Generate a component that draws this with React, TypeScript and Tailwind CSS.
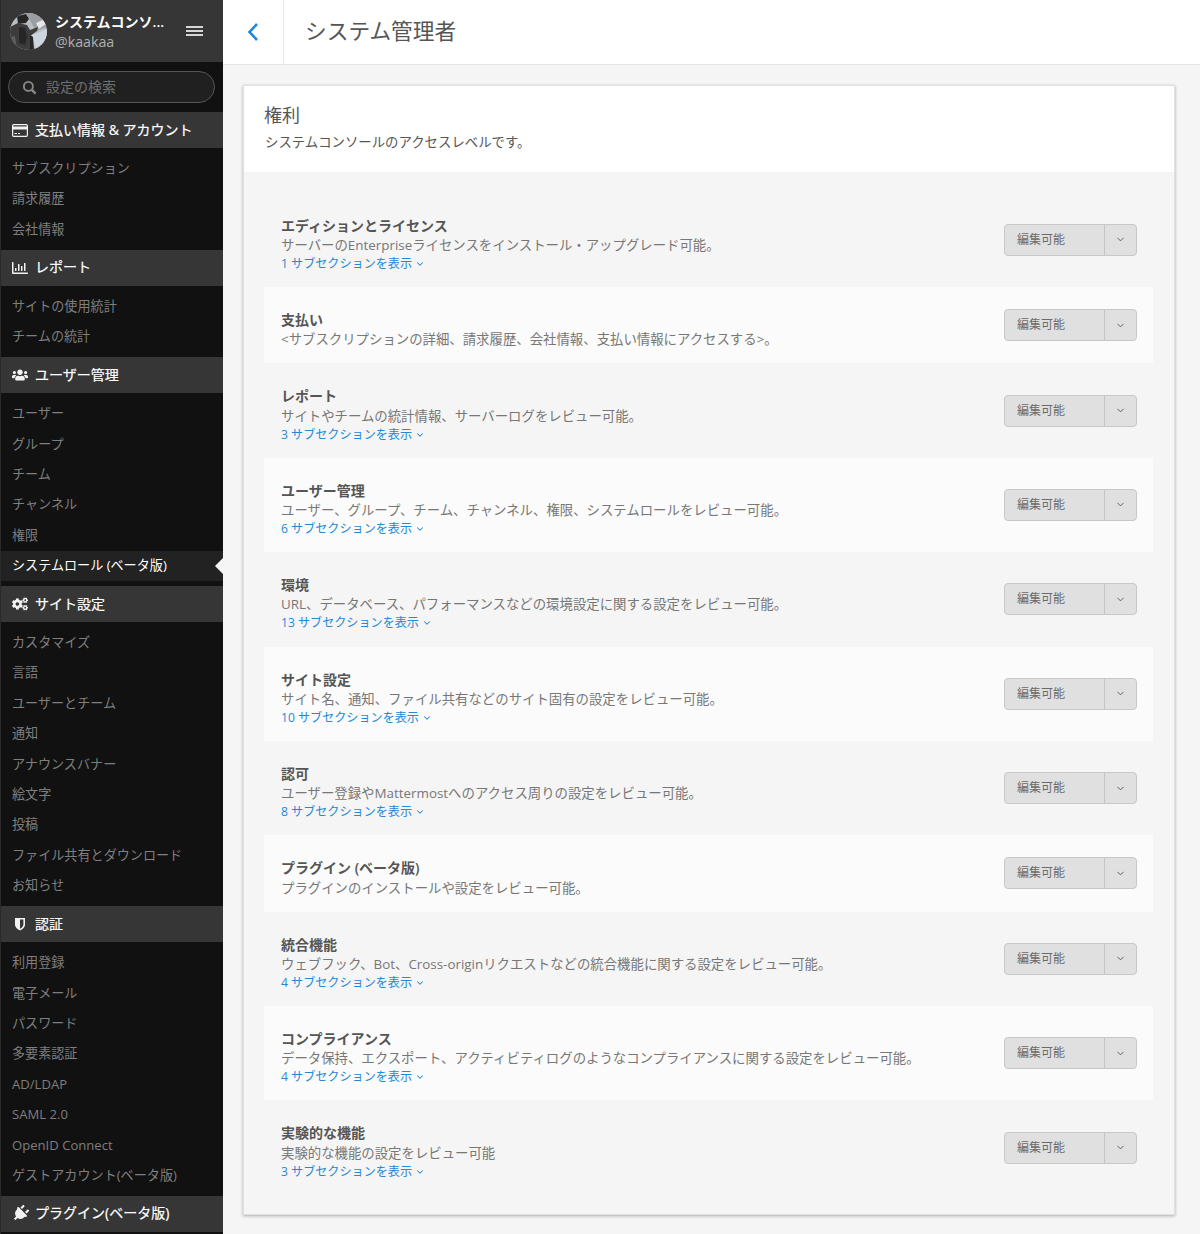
import { ChevronDown } from "lucide-react";
import { FaCogs, FaPlug, FaRegChartBar, FaUsers } from "react-icons/fa";

const fontClass = "font-['Open_Sans','Noto_Sans_CJK_JP',sans-serif]";

const sections = [
    { icon: <CardIcon />, title: "支払い情報 & アカウント", items: ["サブスクリプション", "請求履歴", "会社情報"] },
    { icon: <FaRegChartBar className="h-[16px] w-[16px]" />, title: "レポート", items: ["サイトの使用統計", "チームの統計"] },
    { icon: <FaUsers className="h-[16px] w-[16px]" />, title: "ユーザー管理", items: ["ユーザー", "グループ", "チーム", "チャンネル", "権限", "システムロール (ベータ版)"] },
    { icon: <FaCogs className="h-[16px] w-[16px]" />, title: "サイト設定", items: ["カスタマイズ", "言語", "ユーザーとチーム", "通知", "アナウンスバナー", "絵文字", "投稿", "ファイル共有とダウンロード", "お知らせ"] },
    { icon: <ShieldIcon />, title: "認証", items: ["利用登録", "電子メール", "パスワード", "多要素認証", "AD/LDAP", "SAML 2.0", "OpenID Connect", "ゲストアカウント(ベータ版)"] },
];

const rows = [
    { title: "エディションとライセンス", desc: "サーバーのEnterpriseライセンスをインストール・アップグレード可能。", count: 1 },
    { title: "支払い", desc: "<サブスクリプションの詳細、請求履歴、会社情報、支払い情報にアクセスする>。" },
    { title: "レポート", desc: "サイトやチームの統計情報、サーバーログをレビュー可能。", count: 3 },
    { title: "ユーザー管理", desc: "ユーザー、グループ、チーム、チャンネル、権限、システムロールをレビュー可能。", count: 6 },
    { title: "環境", desc: "URL、データベース、パフォーマンスなどの環境設定に関する設定をレビュー可能。", count: 13 },
    { title: "サイト設定", desc: "サイト名、通知、ファイル共有などのサイト固有の設定をレビュー可能。", count: 10 },
    { title: "認可", desc: "ユーザー登録やMattermostへのアクセス周りの設定をレビュー可能。", count: 8 },
    { title: "プラグイン (ベータ版)", desc: "プラグインのインストールや設定をレビュー可能。" },
    { title: "統合機能", desc: "ウェブフック、Bot、Cross-originリクエストなどの統合機能に関する設定をレビュー可能。", count: 4 },
    { title: "コンプライアンス", desc: "データ保持、エクスポート、アクティビティログのようなコンプライアンスに関する設定をレビュー可能。", count: 4 },
    { title: "実験的な機能", desc: "実験的な機能の設定をレビュー可能", count: 3 },
];

function CardIcon() {
    return (
        <svg viewBox="0 0 16 13" className="h-[13px] w-[16px]">
            <rect x="0.6" y="0.6" width="14.8" height="11.8" rx="1.2" fill="none" stroke="currentColor" strokeWidth="1.2" />
            <rect x="1" y="2.5" width="14" height="3" fill="currentColor" />
            <path d="M2.5 9.5h2.5M6 9.5h2" stroke="currentColor" strokeWidth="1" />
        </svg>
    );
}

function ShieldIcon() {
    return (
        <svg viewBox="0 0 12 14" className="h-[14px] w-[12px]">
            <path d="M1 1h10v6.5c0 3-2.6 4.7-5 6-2.4-1.3-5-3-5-6z" fill="currentColor" />
            <path d="M6 2.6h3.4v4.9c0 2-1.7 3.3-3.4 4.3z" fill="#363636" />
        </svg>
    );
}

function Avatar() {
    return (
        <svg viewBox="0 0 37 37" className="h-[37px] w-[37px] shrink-0">
            <defs>
                <clipPath id="avatar-clip"><circle cx="18.5" cy="18.5" r="18.5" /></clipPath>
            </defs>
            <g clipPath="url(#avatar-clip)">
                <rect width="37" height="37" fill="#b9bec4" />
                <path d="M22 22l15-6v21H26z" fill="#cdd5df" />
                <path d="M16 0h21v14l-11 4z" fill="#9a9da1" />
                <path d="M26 10l11-5v5l-8 6z" fill="#e4e6e8" />
                <path d="M7 3l9-2 3 5-3 4-8 1z" fill="#262626" />
                <path d="M0 14l8-4 9 2 3 5 8-3-1 4-7 5 3 16H0z" fill="#3c3c3c" />
                <path d="M9 14l6 1 2 9-2 8-6-2zM20 22l3 2 1 13h-4z" fill="#262626" />
                <path d="M0 24l5-1 2 14H0z" fill="#5e5e5e" />
            </g>
        </svg>
    );
}

function Sidebar() {
    return (
        <aside className="flex w-[223px] shrink-0 flex-col border-l border-[#2a2a2a] bg-[#111111]">
            <div className="flex h-[62px] items-center bg-[#363636] pl-[9px] pr-[20px]">
                <Avatar />
                <div className="ml-[8px] min-w-0 flex-1 pt-[2px]">
                    <div className="text-[14px] leading-[19px] font-semibold text-white">システムコンソ...</div>
                    <div className="text-[14.2px] leading-[21px] text-[#b0b0b0]">@kaakaa</div>
                </div>
                <div className="flex w-[17px] flex-col gap-[2px]">
                    <span className="h-[2px] bg-[#d6d6d6]" />
                    <span className="h-[2px] bg-[#d6d6d6]" />
                    <span className="h-[2px] bg-[#d6d6d6]" />
                </div>
            </div>
            <div className="flex h-[50px] items-center pl-[7px] pr-[8px]">
                <div className="flex h-[32px] w-full items-center rounded-full border border-[#555555] bg-[#202020] pl-[13px]">
                    <svg viewBox="0 0 16 16" className="h-[15px] w-[15px] text-[#8a8a8a]" fill="none" stroke="currentColor" strokeWidth="2">
                        <circle cx="6.8" cy="6.8" r="4.8" />
                        <path d="M10.5 10.5L14.5 14.5" strokeWidth="2.6" />
                    </svg>
                    <span className="ml-[9px] pb-[2px] text-[14px] text-[#6f6f6f]">設定の検索</span>
                </div>
            </div>
            {sections.map((section) => (
                <div key={section.title}>
                    <SectionHeader icon={section.icon} title={section.title} />
                    <ul className="pt-[5.6px] pb-[5px]">
                        {section.items.map((item) => {
                            const active = item === "システムロール (ベータ版)";
                            return (
                                <li
                                    key={item}
                                    className={
                                        active
                                            ? "relative flex h-[30.4px] items-center bg-[#222222] pl-[11px] text-[13.1px] text-white"
                                            : "flex h-[30.4px] items-center pl-[11px] text-[13.1px] text-[#7f7f7f]"
                                    }
                                >
                                    {item}
                                    {active && (
                                        <span className="absolute right-0 top-[7px] h-0 w-0 border-y-[8px] border-r-[8px] border-y-transparent border-r-[#f5f5f5]" />
                                    )}
                                </li>
                            );
                        })}
                    </ul>
                </div>
            ))}
            <SectionHeader icon={<FaPlug className="h-[17px] w-[17px] rotate-45" />} title="プラグイン(ベータ版)" />
        </aside>
    );
}

function SectionHeader({ icon, title }: { icon: React.ReactNode; title: string }) {
    return (
        <div className="flex h-[36px] items-center bg-[#363636] text-[14px] text-white">
            <span className="flex w-[34px] shrink-0 justify-center pl-[4px] text-[#f2f2f2]">{icon}</span>
            <span className="whitespace-nowrap pb-[2px] [-webkit-text-stroke:0.2px_white]">{title}</span>
        </div>
    );
}

function RoleRow({ title, desc, count, striped }: { title: string; desc: string; count?: number; striped: boolean }) {
    return (
        <div className={striped ? "flex items-center bg-[#fbfbfb] pl-[17px] pr-[16px]" : "flex items-center pl-[17px] pr-[16px]"}>
            <div className="min-w-0 flex-1 pt-[24px] pb-[14px]">
                <div className="text-[14px] leading-[18.2px] font-semibold text-[#555555]">{title}</div>
                <div className="text-[13.4px] leading-[20px] text-[#777777]">{desc}</div>
                {count !== undefined && (
                    <div className="flex h-[18.2px] items-center text-[12.1px] text-[#2389d7]">
                        {count} サブセクションを表示
                        <ChevronDown className="ml-[3px] h-[10px] w-[10px]" strokeWidth={2.5} />
                    </div>
                )}
            </div>
            <div className="flex h-[32px] w-[133px] shrink-0 rounded-[4px] border border-[#c8c8c8] bg-[#e0e0e0]">
                <div className="flex w-[100px] items-center border-r border-[#c4c4c4] pl-[12px] text-[12px] text-[#6b6b6b]">編集可能</div>
                <div className="flex flex-1 items-center justify-center text-[#555555]">
                    <ChevronDown className="h-[11px] w-[11px]" strokeWidth={2} />
                </div>
            </div>
        </div>
    );
}

export default function App() {
    return (
        <div className={`flex h-[1234px] w-[1200px] overflow-hidden bg-[#f5f5f5] ${fontClass}`}>
            <Sidebar />
            <main className="flex min-w-0 flex-1 flex-col">
                <header className="flex h-[65px] shrink-0 items-center border-b border-[#e3e3e3] bg-white">
                    <div className="flex h-full w-[61px] items-center border-r border-[#e8e8e8] pl-[24px]">
                        <svg viewBox="0 0 12 20" className="h-[20px] w-[12px]" fill="none" stroke="#2389d7" strokeWidth="2.6">
                            <path d="M10 2L2.5 10L10 18" />
                        </svg>
                    </div>
                    <h1 className="ml-[21px] pb-[1px] text-[21.7px] text-[#555555]">システム管理者</h1>
                </header>
                <div className="pt-[20px] pl-[20px] pr-[25px]">
                    <section className="border border-[#e0e0e0] bg-[#f5f5f5] shadow-[0_1px_3px_rgba(0,0,0,0.3)]">
                        <div className="h-[86px] bg-white pl-[20px] pt-[17px]">
                            <h2 className="text-[18px] leading-[25px] text-[#555555]">権利</h2>
                            <p className="mt-[5px] pl-[1px] text-[13.4px] leading-[18px] text-[#555555]">システムコンソールのアクセスレベルです。</p>
                        </div>
                        <div className="pt-[20.8px] pb-[19.2px] pl-[20px] pr-[21px]">
                            {rows.map((row, i) => (
                                <RoleRow key={row.title} title={row.title} desc={row.desc} count={row.count} striped={i % 2 === 1} />
                            ))}
                        </div>
                    </section>
                </div>
            </main>
        </div>
    );
}
